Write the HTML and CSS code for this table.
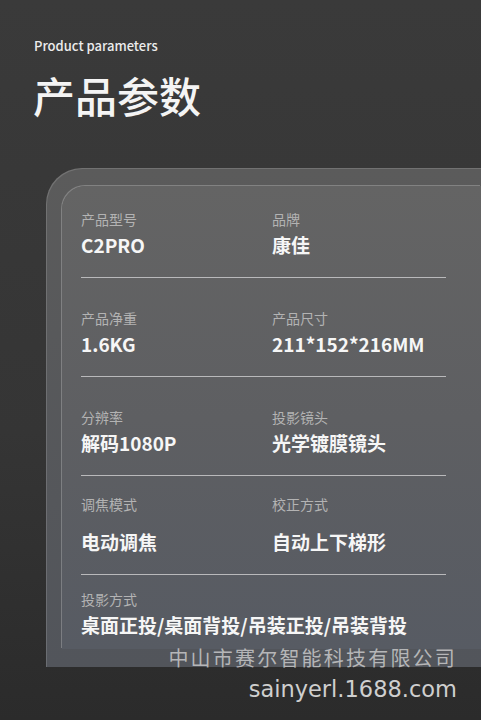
FILE: index.html
```html
<!DOCTYPE html>
<html lang="zh-CN">
<head>
    <meta charset="UTF-8">
    <meta name="viewport" content="width=device-width, initial-scale=1.0">
    <title>产品参数</title>
    <link rel="stylesheet" href="styles.css">
</head>
<body>
    <header>
        <p class="sub">Product parameters</p>
        <h1>产品参数</h1>
    </header>

    <div class="card">
        <div class="panel">
            <div class="row first">
                <div class="cell">
                    <span class="label">产品型号</span>
                    <span class="value">C2PRO</span>
                </div>
                <div class="cell">
                    <span class="label">品牌</span>
                    <span class="value">康佳</span>
                </div>
            </div>
            <div class="row">
                <div class="cell">
                    <span class="label">产品净重</span>
                    <span class="value">1.6KG</span>
                </div>
                <div class="cell">
                    <span class="label">产品尺寸</span>
                    <span class="value">211*152*216MM</span>
                </div>
            </div>
            <div class="row">
                <div class="cell">
                    <span class="label">分辨率</span>
                    <span class="value">解码1080P</span>
                </div>
                <div class="cell">
                    <span class="label">投影镜头</span>
                    <span class="value">光学镀膜镜头</span>
                </div>
            </div>
            <div class="row loose">
                <div class="cell">
                    <span class="label">调焦模式</span>
                    <span class="value">电动调焦</span>
                </div>
                <div class="cell">
                    <span class="label">校正方式</span>
                    <span class="value">自动上下梯形</span>
                </div>
            </div>
            <div class="row last">
                <div class="cell wide">
                    <span class="label">投影方式</span>
                    <span class="value">桌面正投/桌面背投/吊装正投/吊装背投</span>
                </div>
            </div>
        </div>
    </div>

    <div class="watermark">
        <span class="company">中山市赛尔智能科技有限公司</span>
        <span class="site">sainyerl.1688.com</span>
    </div>
</body>
</html>
```

FILE: styles.css
```css
body {
    font-family: "Noto Sans CJK SC", "Noto Sans", sans-serif;
    margin: 0;
    padding: 0;
    width: 481px;
    height: 720px;
    overflow: hidden;
    position: relative;
    background: linear-gradient(to bottom, #3a3a3a 0%, #353535 60%, #2b2b2b 100%);
    color: #fff;
}

header {
    padding: 36px 0 0 34px;
}

header .sub {
    margin: 0;
    font-size: 13px;
    line-height: 20px;
    font-weight: 500;
    color: #ececec;
}

header h1 {
    margin: 14px 0 0 -1px;
    font-size: 42px;
    line-height: 50px;
    font-weight: 500;
    color: #f4f4f4;
}

.card {
    margin: 48px 0 0 46px;
    padding: 18px 0 18px 16px;
    border-top-left-radius: 36px;
    background: linear-gradient(to bottom, #5b5b5b, #52555b);
    box-shadow: inset 1px 1px 0 rgba(255, 255, 255, 0.14);
}

.panel {
    padding: 0 0 12px 19px;
    border-top-left-radius: 24px;
    background: linear-gradient(to bottom, #646464 0%, #5e5f62 50%, #575b63 100%);
    box-shadow: -1px -1px 0 rgba(255, 255, 255, 0.24);
}

.row {
    display: grid;
    grid-template-columns: 191px 1fr;
    width: 365px;
    padding: 30px 0 20px;
    border-bottom: 1px solid #b9b9bb;
}

.row.first {
    padding-top: 23px;
}

.row.loose {
    padding-top: 18px;
}

.row.loose .cell {
    gap: 16px;
}

.row.last {
    padding-top: 14px;
    padding-bottom: 0;
    border-bottom: none;
}

.cell {
    display: flex;
    flex-direction: column;
    gap: 4px;
}

.cell.wide {
    grid-column: 1 / 3;
    width: 400px;
}

.label {
    font-size: 14px;
    line-height: 20px;
    color: #b3b3b3;
}

.value {
    font-size: 19px;
    line-height: 24px;
    font-weight: 700;
    color: #f6f6f6;
    white-space: nowrap;
}

.watermark {
    position: absolute;
    right: 24px;
    top: 646px;
    display: flex;
    flex-direction: column;
    align-items: flex-end;
    gap: 6px;
}

.watermark .company {
    font-size: 20px;
    line-height: 24px;
    letter-spacing: 2.2px;
    color: rgba(215, 215, 215, 0.75);
}

.watermark .site {
    font-family: "DejaVu Sans", sans-serif;
    font-size: 22.5px;
    line-height: 26px;
    color: #cfcfcf;
}
```
